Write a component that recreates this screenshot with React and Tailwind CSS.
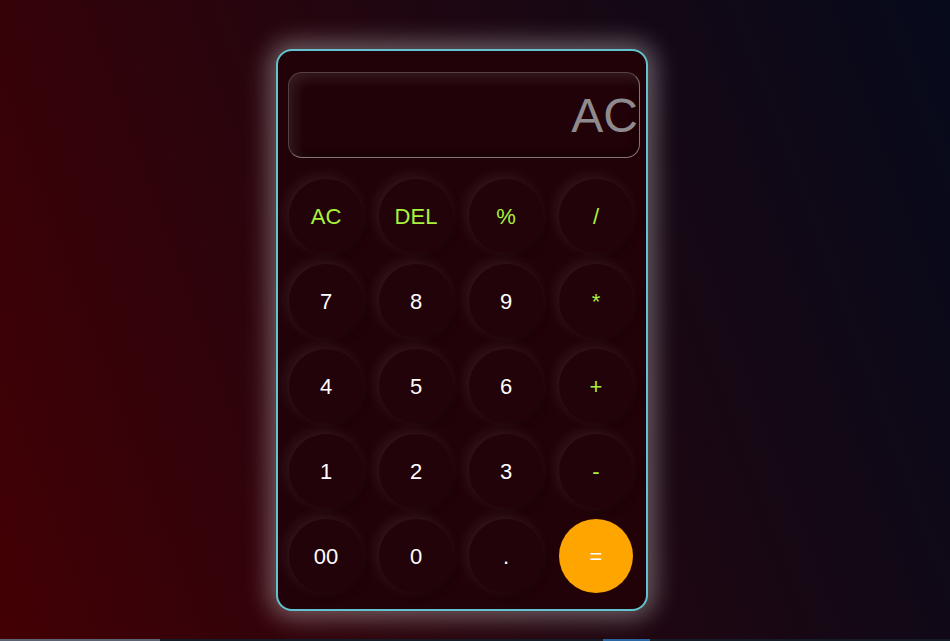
const rows = [
  [
    { label: "AC", op: true },
    { label: "DEL", op: true },
    { label: "%", op: true },
    { label: "/", op: true },
  ],
  [{ label: "7" }, { label: "8" }, { label: "9" }, { label: "*", op: true }],
  [{ label: "4" }, { label: "5" }, { label: "6" }, { label: "+", op: true }],
  [{ label: "1" }, { label: "2" }, { label: "3" }, { label: "-", op: true }],
  [{ label: "00" }, { label: "0" }, { label: "." }, { label: "=", equal: true }],
];

const Key = ({ label, op, equal }) => {
  let cls =
    "w-[74px] h-[74px] rounded-full flex items-center justify-center text-[22px] ";
  if (equal) {
    cls += "bg-[#ffa500] text-white";
  } else {
    cls +=
      "bg-[#220309] shadow-[-3px_-3px_14px_rgba(255,255,255,0.1),3px_3px_10px_rgba(0,0,0,0.2)] " +
      (op ? "text-[#a9f23c]" : "text-white");
  }
  return <button className={cls}>{label}</button>;
};

export default function App() {
  return (
    <div className="w-[950px] h-[641px] flex flex-col bg-linear-[70deg] from-[#420004] via-[#210610] to-[#060a1b] font-['Liberation_Sans',Arial,sans-serif] overflow-hidden">
      <div className="flex-1 pt-[49px] pl-[276px]">
        <div className="w-[372px] h-[562px] rounded-[16px] border-2 border-[#62c3cf] bg-[#200208] shadow-[0_0_24px_7px_rgba(255,255,255,0.35)] pl-[10px] pr-[5px] pt-[21px]">
          <div className="w-[352px] h-[86px] rounded-[14px] border border-white/25 border-b-white/45 border-r-white/45 shadow-[inset_6px_6px_12px_rgba(255,255,255,0.1),inset_-2px_-2px_8px_rgba(0,0,0,0.3)] flex items-center justify-end overflow-hidden">
            <span className="text-[48px] leading-none text-[#8f8a8d] mt-[2px] mr-[1px]">AC</span>
          </div>
          <div className="flex flex-col gap-[11px] mt-[21px] pl-px">
            {rows.map((row, i) => (
              <div key={i} className="flex gap-[16px]">
                {row.map((k) => (
                  <Key key={k.label} {...k} />
                ))}
              </div>
            ))}
          </div>
        </div>
      </div>
      <div className="h-[2px] flex bg-[#161b28]">
        <div className="w-[160px] bg-[#5d6272]" />
        <div className="w-[443px]" />
        <div className="w-[47px] bg-[#2a66a3]" />
      </div>
    </div>
  );
}
